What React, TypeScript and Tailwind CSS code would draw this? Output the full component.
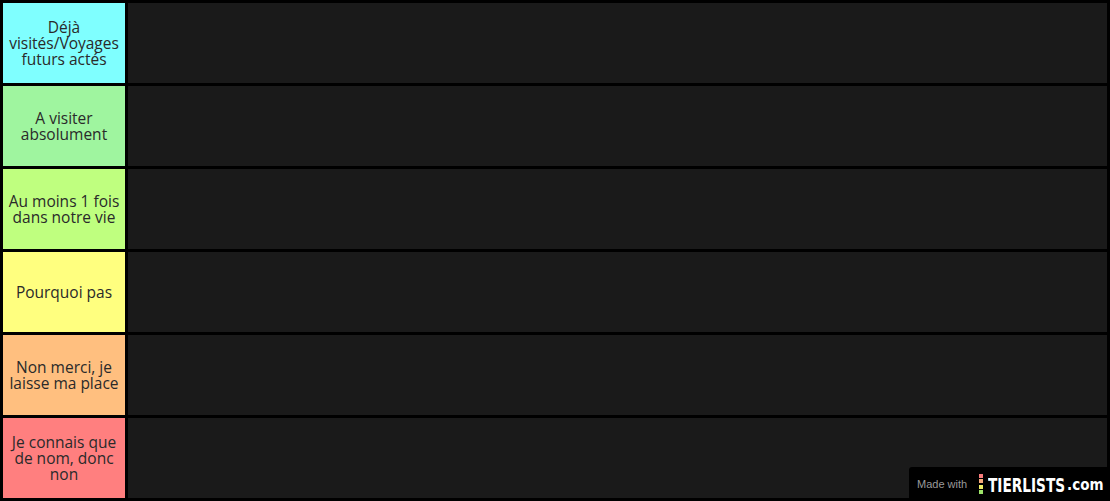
import React from "react";

const rows: { label: string; bg: string }[] = [
  { label: "Déjà visités/Voyages futurs actés", bg: "bg-[#7fffff]" },
  { label: "A visiter absolument", bg: "bg-[#9ff59f]" },
  { label: "Au moins 1 fois dans notre vie", bg: "bg-[#bfff7f]" },
  { label: "Pourquoi pas", bg: "bg-[#ffff7f]" },
  { label: "Non merci, je laisse ma place", bg: "bg-[#ffbf7f]" },
  { label: "Je connais que de nom, donc non", bg: "bg-[#ff7f7f]" },
];

export default function App() {
  return (
    <div className="relative w-[1110px] h-[501px] bg-black p-[3px] flex flex-col gap-[3px] overflow-hidden font-['Open_Sans','Noto_Sans',sans-serif]">
      {rows.map((r) => (
        <div key={r.label} className="flex gap-[3px] h-[80px]">
          <div
            className={`${r.bg} w-[122px] shrink-0 flex items-center justify-center text-center px-[2px] text-[15.5px] leading-[16px] text-[#2a2a2a]`}
          >
            {r.label}
          </div>
          <div className="flex-1 bg-[#1a1a1a]" />
        </div>
      ))}
      <div className="absolute right-0 bottom-0 w-[201px] h-[34px] bg-black rounded-tl-[3px] flex items-center pl-[8px] whitespace-nowrap">
        <span className="text-[11px] text-[#9a9a9a] font-['Liberation_Sans',sans-serif] w-[54px]">Made with</span>
        <div className="flex flex-col gap-[1.5px] ml-[8px] mr-[5px]">
          <div className="w-[4px] h-[4px] bg-[#f77b7b]" />
          <div className="w-[4px] h-[4px] bg-[#f7a97b]" />
          <div className="w-[4px] h-[4px] bg-[#eeee66]" />
          <div className="w-[4px] h-[4px] bg-[#9ee56a]" />
        </div>
        <div className="w-[79px] h-[20px] overflow-visible">
          <span className="text-white font-bold font-['DejaVu_Sans_Condensed',sans-serif] text-[20px] leading-[20px] inline-block origin-left scale-x-[0.76]">
            TIERLISTS
          </span>
        </div>
        <span className="text-white font-bold font-['DejaVu_Sans_Condensed',sans-serif] text-[15px] leading-none mt-[3px]">.com</span>
      </div>
    </div>
  );
}
